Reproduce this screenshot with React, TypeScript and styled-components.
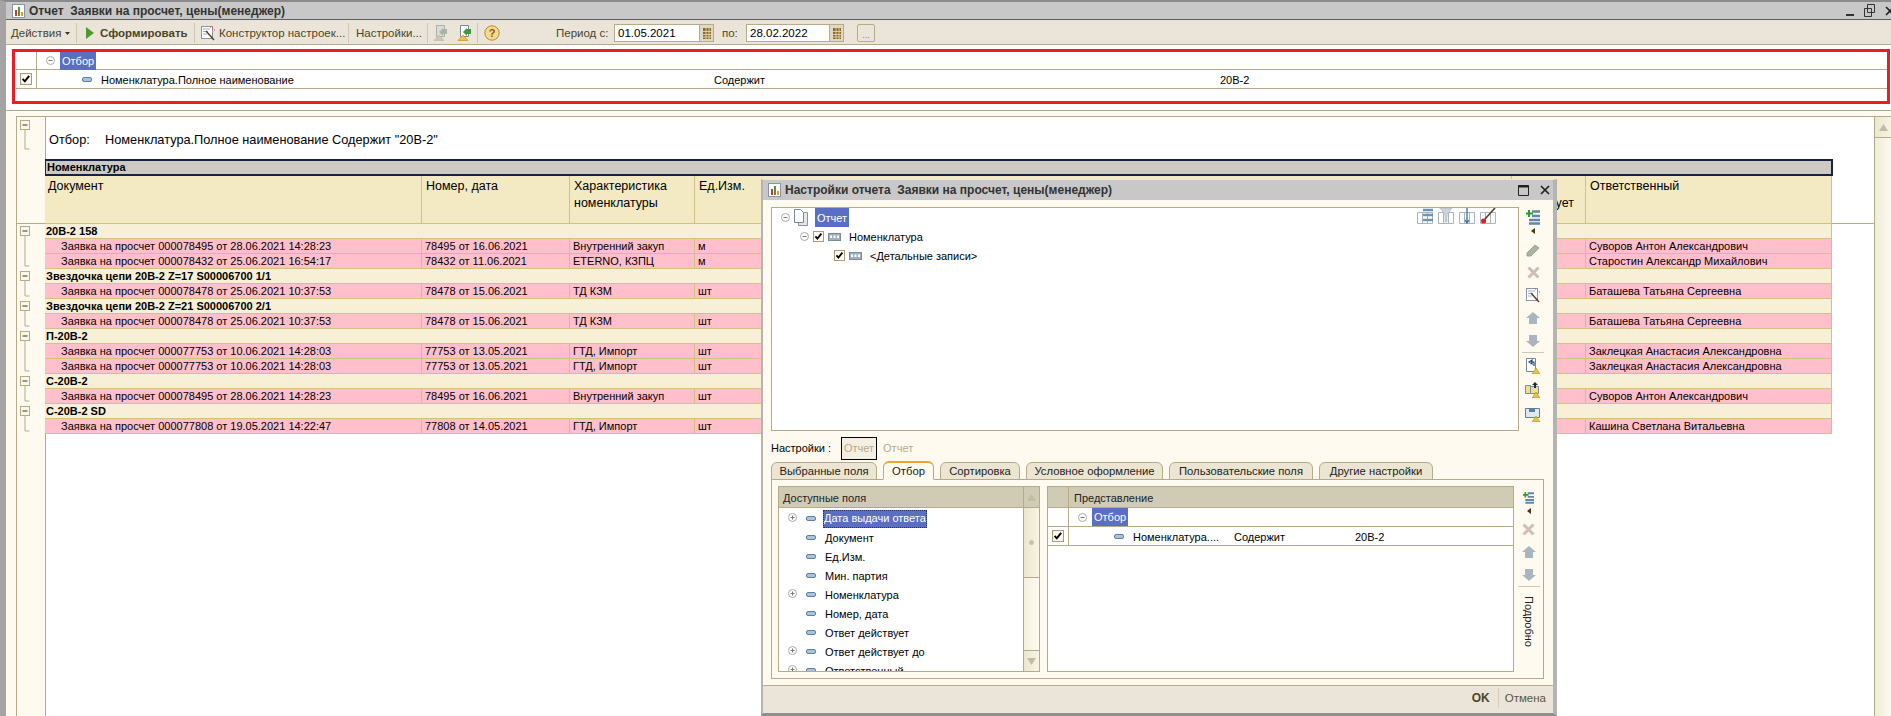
import React from 'react';
import styled, { createGlobalStyle } from 'styled-components';

const GlobalStyle = createGlobalStyle`
  html, body {
    margin: 0;
    padding: 0;
    overflow: hidden;
    background: #fffaf0;
  }
  * {
    box-sizing: border-box;
  }
`;

const LINE = '#b5ab88';
const CELL = '#cfc383';

const Page = styled.div`
  position: relative;
  width: 1891px;
  height: 716px;
  display: flex;
  flex-direction: column;
  overflow: hidden;
  background: #fffaf0;
  border-top: 2px solid #8a8a8a;
  border-left: 6px solid #a4a4a4;
  font-family: 'Liberation Sans', Arial, sans-serif;
  font-size: 11px;
  color: #000;
`;

const TitleBar = styled.div`
  height: 18px;
  flex: none;
  display: flex;
  align-items: center;
  gap: 4px;
  padding-left: 6px;
  overflow: hidden;
  background: #c8c8c8;
  border-bottom: 1px solid #5e5e5e;
`;

const TitleText = styled.span`
  font-size: 12px;
  font-weight: 700;
  color: #333;
  white-space: pre;
`;

const WindowButtons = styled.div`
  margin-left: auto;
  margin-right: -4px;
  display: flex;
  align-items: center;
  gap: 10px;
`;

const Toolbar = styled.div`
  height: 25px;
  flex: none;
  display: flex;
  align-items: center;
  padding: 2px 0 0 5px;
  background: #ebe5d9;
  border-bottom: 1px solid ${LINE};
`;

const ToolText = styled.span<{ $bold?: boolean; $w: number; $l?: number }>`
  width: ${(p) => p.$w}px;
  flex: none;
  margin-left: ${(p) => p.$l ?? 0}px;
  color: #4a4528;
  font-size: 11.5px;
  font-weight: ${(p) => (p.$bold ? 700 : 400)};
  white-space: nowrap;
`;

const ToolSep = styled.span<{ $l: number; $r: number }>`
  width: 1px;
  height: 20px;
  flex: none;
  background: #cfc8b4;
  margin: 0 ${(p) => p.$r}px 0 ${(p) => p.$l}px;
`;

const ToolGap = styled.span<{ $w: number }>`
  width: ${(p) => p.$w}px;
  flex: none;
`;

const DateField = styled.div<{ $w: number }>`
  width: ${(p) => p.$w}px;
  height: 18px;
  flex: none;
  display: flex;
  align-items: center;
  padding-left: 3px;
  background: #fff;
  border: 1px solid ${LINE};
  border-right: none;
  font-size: 11.5px;
`;

const DateButton = styled.div`
  width: 15px;
  height: 18px;
  flex: none;
  display: flex;
  align-items: center;
  justify-content: center;
  background: #e0d9c2;
  border: 1px solid ${LINE};
`;

const DotsButton = styled.div`
  width: 18px;
  height: 18px;
  flex: none;
  margin-left: 13px;
  text-align: center;
  line-height: 20px;
  font-size: 9px;
  color: #777;
  background: #ebe5d9;
  border: 1px solid ${LINE};
  border-radius: 2px;
`;

const FilterPanel = styled.div`
  height: 66px;
  flex: none;
  padding: 4px 1px 0 6px;
  background: #fff;
  border-bottom: 1px solid ${LINE};
`;

const RedFrame = styled.div`
  height: 55px;
  border: 3px solid #ed1c24;
  padding-left: 1px;
  background: #fff;
`;

const FilterRow = styled.div<{ $h?: number }>`
  height: ${(p) => p.$h ?? 19}px;
  display: flex;
  align-items: center;
  border-bottom: 1px solid ${LINE};
`;

const CheckCol = styled.div<{ $w: number }>`
  width: ${(p) => p.$w}px;
  height: 100%;
  flex: none;
  display: flex;
  align-items: center;
  justify-content: center;
  border-right: 1px solid ${LINE};
`;

const Selected = styled.span<{ $h?: number; $l?: number }>`
  display: inline-block;
  height: ${(p) => p.$h ?? 18}px;
  line-height: ${(p) => (p.$h ?? 18) + 1}px;
  margin-left: ${(p) => p.$l ?? 0}px;
  padding: 0 2px;
  background: #5a6fc3;
  color: #fff;
  white-space: nowrap;
`;

const Cell = styled.span<{ $w?: number; $l?: number }>`
  ${(p) => (p.$w ? `width: ${p.$w}px; flex: none;` : '')}
  ${(p) => (p.$l ? `margin-left: ${p.$l}px;` : '')}
  white-space: nowrap;
`;

const InlineCell = styled.span<{ $l: number; $gap: number; $low?: boolean }>`
  display: flex;
  align-items: center;
  height: 100%;
  margin-left: ${(p) => p.$l}px;
  gap: ${(p) => p.$gap}px;
  ${(p) => (p.$low ? 'padding-top: 1px;' : '')}
`;

const Body = styled.div`
  flex: 1;
  min-height: 0;
  display: flex;
  margin-top: 5px;
  background: #fffaf0;
`;

const ReportArea = styled.div`
  flex: 1;
  min-width: 0;
  margin-left: 10px;
  display: grid;
  grid-template-columns: 29px 1fr 17px;
  border-top: 1px solid ${LINE};
  border-left: 1px solid ${LINE};
`;

const Gutter = styled.div`
  display: flex;
  flex-direction: column;
  border-right: 1px solid ${LINE};
`;

const GutterHead = styled.div`
  height: 107px;
  flex: none;
  padding: 3px 0 0 3px;
  border-bottom: 1px solid ${LINE};
`;

const GutterGroup = styled.div<{ $rows: number }>`
  height: ${(p) => p.$rows * 15}px;
  flex: none;
  padding: 2px 0 0 3px;
`;

const Sheet = styled.div`
  background: #fff;
  position: relative;
  min-width: 0;
`;

const SheetRule = styled.div`
  position: absolute;
  left: 0;
  right: 0;
  top: 106px;
  height: 1px;
  background: ${LINE};
`;

const FilterLine = styled.div`
  height: 42px;
  display: flex;
  align-items: center;
  padding: 3px 0 0 3px;
  font-size: 12.75px;
`;

const ReportTable = styled.div`
  position: relative;
  width: 1788px;
  margin-left: -1px;
`;

const GroupHeader = styled.div`
  height: 17px;
  padding-left: 1px;
  font-weight: 700;
  line-height: 13px;
  background: #cdcac3;
  border: 2px solid #14224a;
  border-left-width: 1px;
`;

const Row = styled.div<{ $kind: 'head' | 'group' | 'item' }>`
  display: grid;
  grid-template-columns: 377px 148px 125px 817px 74px 246px;
  height: ${(p) => (p.$kind === 'head' ? 48 : 15)}px;
  width: 1787px;
  background: ${(p) => (p.$kind === 'head' ? '#f3eac3' : p.$kind === 'group' ? '#f7f0d7' : '#ffc0cb')};
  border-bottom: 1px solid ${CELL};
  font-weight: ${(p) => (p.$kind === 'group' ? 700 : 400)};
  font-size: ${(p) => (p.$kind === 'head' ? '12.5px' : '11px')};
`;

const Td = styled.div<{ $pad?: number }>`
  padding-left: ${(p) => p.$pad ?? 3}px;
  line-height: 14px;
  white-space: nowrap;
  overflow: hidden;
  border-right: 1px solid ${CELL};
`;

const HeadTd = styled.div<{ $first: boolean }>`
  padding: 2px 0 0 ${(p) => (p.$first ? 3 : 4)}px;
  line-height: 17px;
  white-space: pre;
  border-right: 1px solid ${CELL};
`;

const GroupTd = styled.div`
  grid-column: 1 / -1;
  padding-left: 1px;
  line-height: 14px;
  white-space: nowrap;
  border-right: 1px solid ${CELL};
`;

const Scrollbar = styled.div`
  border-left: 1px solid ${LINE};
  background: linear-gradient(90deg, #f1ecd9, #fdfaf0);
  display: flex;
  flex-direction: column;
  align-items: center;
`;

const ScrollBtn = styled.div<{ $tan?: boolean }>`
  width: 100%;
  height: 21px;
  flex: none;
  display: flex;
  align-items: center;
  justify-content: center;
  background: ${(p) => (p.$tan ? '#cfcbb5' : 'linear-gradient(90deg, #ece6cf, #f9f4e2)')};
  border-bottom: 1px solid ${LINE};
`;

const Dialog = styled.div`
  position: absolute;
  left: 755px;
  top: 177px;
  width: 796px;
  height: 537px;
  display: flex;
  flex-direction: column;
  background: #fffaf0;
  border-left: 2px solid #b4b4b4;
  border-right: 4px solid #b4b4b4;
  border-bottom: 3px solid #8f8f8f;
  border-top: 1px solid #e6e6e6;
`;

const DialogTitle = styled.div`
  height: 20px;
  flex: none;
  display: flex;
  align-items: center;
  gap: 4px;
  padding-left: 5px;
  background: #c8c8c8;
`;

const DialogTitleText = styled.span`
  font-weight: 700;
  font-size: 12px;
  color: #333;
  white-space: pre;
`;

const DialogButtons = styled.div`
  margin-left: auto;
  display: flex;
  align-items: center;
  gap: 11px;
  padding-right: 3px;
`;

const DialogBody = styled.div`
  flex: none;
  padding: 7px 9px 0 8px;
  display: flex;
  flex-direction: column;
`;

const TopRow = styled.div`
  height: 224px;
  flex: none;
  display: flex;
`;

const TreePanel = styled.div`
  position: relative;
  width: 748px;
  flex: none;
  background: #fff;
  border: 1px solid ${LINE};
`;

const TreeRow = styled.div<{ $indent: number }>`
  height: 19px;
  display: flex;
  align-items: center;
  gap: 4px;
  padding-left: ${(p) => p.$indent}px;
`;

const TreeIcons = styled.div`
  position: absolute;
  top: 0;
  right: 22px;
  display: flex;
  gap: 5px;
`;

const SideTools = styled.div`
  flex: 1;
  display: flex;
  flex-direction: column;
  align-items: center;
  padding: 3px 0 0 3px;
`;

const SideGap = styled.div<{ $h: number }>`
  height: ${(p) => p.$h}px;
  flex: none;
`;

const SideSep = styled.div`
  width: 22px;
  height: 1px;
  flex: none;
  margin: 5px 0;
  background: #cfc8b4;
`;

const SettingsRow = styled.div`
  height: 30px;
  flex: none;
  display: flex;
  align-items: center;
  padding-top: 4px;
`;

const SettingsBox = styled.div`
  width: 36px;
  height: 23px;
  margin: 0 6px 0 10px;
  display: flex;
  align-items: center;
  justify-content: center;
  color: #b5a987;
  background: #f5efe3;
  border: 1px solid #000;
`;

const SettingsName = styled.span`
  color: #b5a987;
`;

const Tabs = styled.div`
  height: 19px;
  flex: none;
  display: flex;
  align-items: flex-end;
  gap: 6px;
  position: relative;
  z-index: 1;
`;

const Tab = styled.div<{ $w: number; $active?: boolean }>`
  width: ${(p) => p.$w}px;
  height: ${(p) => (p.$active ? 19 : 18)}px;
  flex: none;
  text-align: center;
  line-height: 17px;
  font-size: 11.25px;
  color: #222;
  background: ${(p) => (p.$active ? '#fffaf0' : '#ebe5d1')};
  border: 1px solid ${LINE};
  border-top: ${(p) => (p.$active ? '2px solid #e8a93a' : `1px solid ${LINE}`)};
  border-bottom: ${(p) => (p.$active ? '1px solid #fffaf0' : `1px solid ${LINE}`)};
  border-radius: 6px 6px 0 0;
`;

const TabBody = styled.div`
  height: 200px;
  margin-top: -1px;
  flex: none;
  display: flex;
  padding: 6px 0 6px 6px;
  border: 1px solid ${LINE};
`;

const FieldList = styled.div`
  width: 262px;
  flex: none;
  display: grid;
  grid-template-columns: 1fr 16px;
  overflow: hidden;
  background: #fff;
  border: 1px solid ${LINE};
`;

const ListColumn = styled.div`
  min-width: 0;
  overflow: hidden;
`;

const ListHead = styled.div`
  height: 21px;
  padding-left: 4px;
  line-height: 22px;
  color: #222;
  background: #cfcbb5;
  border-bottom: 1px solid ${LINE};
`;

const FieldRow = styled.div`
  height: 19px;
  display: flex;
  align-items: center;
  position: relative;
  padding: 2px 0 0 27px;
  gap: 9px;
`;

const PlusSlot = styled.span`
  position: absolute;
  left: 9px;
  top: 5px;
  display: flex;
`;

const FieldSelected = styled.span`
  display: inline-block;
  height: 18px;
  line-height: 17px;
  margin-left: -2px;
  padding: 0 1px;
  color: #fff;
  background: #5a6fc3;
  outline: 1px dotted #24305e;
  outline-offset: -1px;
`;

const ListScroll = styled.div`
  display: flex;
  flex-direction: column;
  background: linear-gradient(90deg, #f5f1e0, #fdfaf0);
  border-left: 1px solid ${LINE};
`;

const ScrollThumb = styled.div`
  height: 70px;
  flex: none;
  background: radial-gradient(circle at 50% 50%, #c9c4ac 2px, transparent 3px), linear-gradient(90deg, #ece6cf, #f9f4e2);
  border-bottom: 1px solid ${LINE};
`;

const ScrollFill = styled.div`
  flex: 1;
`;

const ScrollFoot = styled.div`
  height: 21px;
  flex: none;
  display: flex;
  align-items: center;
  justify-content: center;
  background: linear-gradient(90deg, #ece6cf, #f9f4e2);
  border-top: 1px solid ${LINE};
`;

const SelectionTable = styled.div`
  width: 467px;
  flex: none;
  margin-left: 7px;
  background: #fff;
  border: 1px solid ${LINE};
`;

const SelHead = styled.div`
  height: 21px;
  display: flex;
  line-height: 22px;
  color: #222;
  background: #cfcbb5;
  border-bottom: 1px solid ${LINE};
`;

const SelRow = styled.div`
  height: 19px;
  display: flex;
  align-items: center;
  border-bottom: 1px solid ${LINE};
`;

const SideToolsSmall = styled.div`
  flex: 1;
  display: flex;
  flex-direction: column;
  align-items: center;
  padding-top: 5px;
`;

const VerticalLabel = styled.div`
  writing-mode: vertical-rl;
  font-size: 11px;
  color: #222;
  margin-top: 4px;
`;

const DialogFooter = styled.div`
  flex: 1;
  min-height: 0;
  margin-top: 6px;
  display: flex;
  align-items: center;
  justify-content: flex-end;
  padding: 0 7px 3px 0;
  background: #ebe5d9;
  border-top: 1px solid ${LINE};
`;

const OkButton = styled.span`
  font-weight: 700;
  font-size: 12px;
  color: #4a4528;
`;

const FooterSep = styled.span`
  width: 1px;
  height: 20px;
  margin: 0 6px 0 8px;
  background: #d5cdb8;
`;

const CancelButton = styled.span`
  color: #5b5636;
  font-size: 11.5px;
`;

function ReportIcon() {
  return (
    <svg width="13" height="14" viewBox="0 0 13 14" style={{ flex: 'none' }}>
      <rect x="0.5" y="0.5" width="12" height="13" fill="#fff" stroke="#8a94a6" />
      <rect x="3" y="6" width="2" height="6" fill="#d8342c" />
      <rect x="6" y="3" width="2" height="9" fill="#4a9a3c" />
      <rect x="9" y="8" width="2" height="4" fill="#e0a020" />
    </svg>
  );
}

function Collapse() {
  return (
    <svg width="9" height="9" viewBox="0 0 9 9" style={{ flex: 'none' }}>
      <circle cx="4.5" cy="4.5" r="4" fill="#fff" stroke="#a8a8a8" />
      <path d="M2.5 4.5h4" stroke="#777" />
    </svg>
  );
}

function Expand() {
  return (
    <svg width="9" height="9" viewBox="0 0 9 9" style={{ flex: 'none' }}>
      <circle cx="4.5" cy="4.5" r="4" fill="#fff" stroke="#a8a8a8" />
      <path d="M2.5 4.5h4M4.5 2.5v4" stroke="#777" />
    </svg>
  );
}

function Check({ size = 11 }: { size?: number }) {
  return (
    <svg width={size} height={size} viewBox="0 0 11 11" style={{ flex: 'none' }}>
      <rect x="0.5" y="0.5" width="10" height="10" fill="#fffdf6" stroke="#a89e78" />
      <path d="M2.4 5.4l2 2.2 4-5" fill="none" stroke="#000" strokeWidth="1.8" />
    </svg>
  );
}

function FieldDash() {
  return (
    <svg width="10" height="5" viewBox="0 0 10 5" style={{ flex: 'none' }}>
      <rect x="0.5" y="0.5" width="9" height="4" rx="1.5" fill="#a9c3dc" stroke="#5f7f9f" />
    </svg>
  );
}

function GroupGlyph() {
  return (
    <svg width="13" height="8" viewBox="0 0 13 8" style={{ flex: 'none' }}>
      <rect x="0.5" y="0.5" width="12" height="7" fill="#9fb0bf" stroke="#7d8a99" />
      <path d="M2 2.5h2v2.5H2zM5.5 2.5h2v2.5h-2zM9 2.5h2v2.5H9z" fill="#fff" />
    </svg>
  );
}

function DocGlyph() {
  return (
    <svg width="14" height="17" viewBox="0 0 14 17" style={{ flex: 'none' }}>
      <path d="M4.5 3.5h9v13h-9z" fill="#e3e8ee" stroke="#8a94a6" />
      <path d="M0.5 0.5h6l3 3v10h-9z" fill="#fff" stroke="#7b8698" />
    </svg>
  );
}

function Play() {
  return (
    <svg width="8" height="12" viewBox="0 0 8 12" style={{ flex: 'none' }}>
      <path d="M0 0l8 6-8 6z" fill="#4f9a2e" />
    </svg>
  );
}

function Wand() {
  return (
    <svg width="15" height="15" viewBox="0 0 15 15" style={{ flex: 'none' }}>
      <rect x="0.5" y="0.5" width="11" height="12" fill="#fff" stroke="#8a94a6" />
      <path d="M2 3h7M2 5.5h5M2 8h4" stroke="#9fb0c4" />
      <path d="M5 5l8 9" stroke="#5a3a20" strokeWidth="1.4" />
      <path d="M11 2h1M13 4h1M9 1h1" stroke="#e04040" />
    </svg>
  );
}

function ListAdd({ small }: { small?: boolean }) {
  return (
    <svg width={small ? 11 : 14} height={small ? 14 : 15} viewBox="0 0 14 15" style={{ flex: 'none' }}>
      <path d="M6 1.5h8M6 6h8M3 10h11M3 13.5h11" stroke="#5f87a8" strokeWidth="2.4" />
      <path d="M3 0v7M0 3.5h7" stroke="#2c9a2c" strokeWidth="2" />
    </svg>
  );
}

function Pointer() {
  return (
    <svg width="4" height="6" viewBox="0 0 4 6" style={{ flex: 'none' }}>
      <path d="M4 0v6L0 3z" fill="#4a3410" />
    </svg>
  );
}

function Pencil() {
  return (
    <svg width="14" height="14" viewBox="0 0 14 14" style={{ flex: 'none' }}>
      <path d="M1 10l8-8 4 3-8 8H1z" fill="#aab5a0" stroke="#9aa592" />
    </svg>
  );
}

function Cross() {
  return (
    <svg width="13" height="13" viewBox="0 0 13 13" style={{ flex: 'none' }}>
      <path d="M1.5 1.5l10 10M11.5 1.5l-10 10" stroke="#cdbfb8" strokeWidth="3" />
    </svg>
  );
}

function ArrowUp() {
  return (
    <svg width="14" height="12" viewBox="0 0 14 12" style={{ flex: 'none' }}>
      <path d="M7 0l7 6h-3v6H3V6H0z" fill="#a9b6bf" />
    </svg>
  );
}

function ArrowDown() {
  return (
    <svg width="14" height="12" viewBox="0 0 14 12" style={{ flex: 'none' }}>
      <path d="M3 0h8v6h3l-7 6-7-6h3z" fill="#a9b6bf" />
    </svg>
  );
}

function SaveLoad({ kind }: { kind: 'undo' | 'open' | 'save' }) {
  return (
    <svg width="16" height="16" viewBox="0 0 16 16" style={{ flex: 'none' }}>
      {kind === 'undo' && <path d="M1.5 0.5h9v13h-9z" fill="#fff" stroke="#6f87a0" />}
      {kind === 'open' && <path d="M0.5 3.5h5v8h-5zM5.5 4.5h8v7h-8z" fill="#f3dc93" stroke="#7d8a99" />}
      {kind === 'save' && <path d="M0.5 2.5h14v9h-14z" fill="#dfe7ef" stroke="#5f7f9f" />}
      {kind === 'undo' && <path d="M4 4l3-2v4zM6 4h3v4" fill="none" stroke="#234a70" strokeWidth="1.2" />}
      {kind === 'open' && <path d="M10 0l3 3h-2v3H9V3H7z" fill="#1d2d3d" />}
      {kind === 'save' && <path d="M4 3h6v3H4z" fill="#5f7f9f" />}
      <path d="M11 10l4 6H7z" fill="#f0c040" stroke="#b08a20" strokeWidth="0.6" />
    </svg>
  );
}

function ToolDoc({ muted }: { muted?: boolean }) {
  return (
    <svg width="15" height="16" viewBox="0 0 15 16" style={{ flex: 'none' }}>
      <path d="M3.5 0.5h8v11h-8z" fill={muted ? '#dcdcd4' : '#fff'} stroke={muted ? '#a9b0ad' : '#7b8698'} />
      <path d="M14 4v5h-4v2L6 7l4-4v1z" fill={muted ? '#a8b4a8' : '#3f9a3a'} />
      <path d="M6 10l5 5.5H1z" fill={muted ? '#c9c9b8' : '#f0c040'} stroke={muted ? '#b5b5a5' : '#b08a20'} strokeWidth="0.6" />
    </svg>
  );
}

function ColumnIcon({ kind }: { kind: 'list' | 'filter' | 'sort' | 'paint' }) {
  return (
    <svg width="16" height="16" viewBox="0 0 16 16" style={{ flex: 'none' }}>
      <path d="M0.5 4.5h15v11h-15zM5.5 4.5v11M10.5 4.5v11" fill="#fff" stroke="#a9b4c0" />
      {kind === 'list' && <path d="M6 2h10M6 7h10M6 12h10" stroke="#6a94b8" strokeWidth="2.4" />}
      {kind === 'filter' && <path d="M2 0h12L9 7v7H7V7z" fill="#cdd3d8" stroke="#a8b0b8" strokeWidth="0.6" />}
      {kind === 'sort' && <path d="M8 0v15M6 12l2 3 2-3" stroke="#3c6e9c" fill="none" strokeWidth="1.3" />}
      {kind === 'paint' && <path d="M15 0L5 11" stroke="#5a3a20" strokeWidth="1.6" />}
      {kind === 'paint' && <circle cx="3.5" cy="13" r="2.5" fill="#e41b1b" />}
    </svg>
  );
}

function Tri({ dir }: { dir: 'up' | 'down' }) {
  return (
    <svg width="9" height="7" viewBox="0 0 9 7">
      <path d={dir === 'up' ? 'M4.5 0L9 7H0z' : 'M4.5 7L9 0H0z'} fill="#c0bca8" />
    </svg>
  );
}

function CalendarGlyph() {
  return (
    <svg width="8" height="11" viewBox="0 0 8 11">
      <rect x="0" y="0" width="8" height="11" fill="#8a6a2e" />
      <path d="M0 3.5h8M0 6.5h8M0 9h8M3 0v11M6 0v11" stroke="#ece2c0" strokeWidth="0.8" />
    </svg>
  );
}

function Marker({ h }: { h: number }) {
  return (
    <svg width="12" height={h} viewBox={`0 0 12 ${h}`} style={{ display: 'block' }}>
      <rect x="0.5" y="0.5" width="9" height="9" fill="#fbf7e6" stroke="#b5ab88" />
      <path d="M2.5 5h5" stroke="#333" />
      <path d={`M5 10V${h - 1}H9.5`} fill="none" stroke="#b5ab88" />
    </svg>
  );
}

const HEADS = ['Документ', 'Номер, дата', 'Характеристика\nноменклатуры', 'Ед.Изм.', 'Ответ\nдействует', 'Ответственный'];

type Item = { doc: string; num: string; kind: string; unit: string; owner: string };
type Group = { name: string; items: Item[] };

const GROUPS: Group[] = [
  {
    name: '20В-2 158',
    items: [
      { doc: 'Заявка на просчет 000078495 от 28.06.2021 14:28:23', num: '78495 от 16.06.2021', kind: 'Внутренний закуп', unit: 'м', owner: 'Суворов Антон Александрович' },
      { doc: 'Заявка на просчет 000078432 от 25.06.2021 16:54:17', num: '78432 от 11.06.2021', kind: 'ETERNO, КЗПЦ', unit: 'м', owner: 'Старостин Александр Михайлович' },
    ],
  },
  {
    name: 'Звездочка цепи 20В-2 Z=17 S00006700 1/1',
    items: [
      { doc: 'Заявка на просчет 000078478 от 25.06.2021 10:37:53', num: '78478 от 15.06.2021', kind: 'ТД КЗМ', unit: 'шт', owner: 'Баташева Татьяна Сергеевна' },
    ],
  },
  {
    name: 'Звездочка цепи 20В-2 Z=21 S00006700 2/1',
    items: [
      { doc: 'Заявка на просчет 000078478 от 25.06.2021 10:37:53', num: '78478 от 15.06.2021', kind: 'ТД КЗМ', unit: 'шт', owner: 'Баташева Татьяна Сергеевна' },
    ],
  },
  {
    name: 'П-20В-2',
    items: [
      { doc: 'Заявка на просчет 000077753 от 10.06.2021 14:28:03', num: '77753 от 13.05.2021', kind: 'ГТД, Импорт', unit: 'шт', owner: 'Заклецкая Анастасия Александровна' },
      { doc: 'Заявка на просчет 000077753 от 10.06.2021 14:28:03', num: '77753 от 13.05.2021', kind: 'ГТД, Импорт', unit: 'шт', owner: 'Заклецкая Анастасия Александровна' },
    ],
  },
  {
    name: 'С-20В-2',
    items: [
      { doc: 'Заявка на просчет 000078495 от 28.06.2021 14:28:23', num: '78495 от 16.06.2021', kind: 'Внутренний закуп', unit: 'шт', owner: 'Суворов Антон Александрович' },
    ],
  },
  {
    name: 'С-20В-2 SD',
    items: [
      { doc: 'Заявка на просчет 000077808 от 19.05.2021 14:22:47', num: '77808 от 14.05.2021', kind: 'ГТД, Импорт', unit: 'шт', owner: 'Кашина Светлана Витальевна' },
    ],
  },
];

const FIELDS = [
  { name: 'Документ', plus: false },
  { name: 'Ед.Изм.', plus: false },
  { name: 'Мин. партия', plus: false },
  { name: 'Номенклатура', plus: true },
  { name: 'Номер, дата', plus: false },
  { name: 'Ответ действует', plus: false },
  { name: 'Ответ действует до', plus: true },
  { name: 'Ответственный', plus: true },
];

const TABS = [
  { label: 'Выбранные поля', w: 106 },
  { label: 'Отбор', w: 51, active: true },
  { label: 'Сортировка', w: 80 },
  { label: 'Условное оформление', w: 137 },
  { label: 'Пользовательские поля', w: 144 },
  { label: 'Другие настройки', w: 114 },
];

function App() {
  return (
    <Page>
      <GlobalStyle />
      <TitleBar>
        <ReportIcon />
        <TitleText>Отчет  Заявки на просчет, цены(менеджер)</TitleText>
        <WindowButtons>
          <svg width="8" height="3" viewBox="0 0 8 3" style={{ marginTop: 8 }}><rect width="8" height="2" y="1" fill="#333" /></svg>
          <svg width="11" height="13" viewBox="0 0 11 13"><path d="M3.5 0.5h7v8h-7zM0.5 4.5h7v8h-7z" fill="#c8c8c8" stroke="#333" /></svg>
          <svg width="10" height="10" viewBox="0 0 10 10"><path d="M1 1l8 8M9 1l-8 8" stroke="#222" strokeWidth="1.6" /></svg>
        </WindowButtons>
      </TitleBar>

      <Toolbar>
        <ToolText $w={50}>Действия</ToolText>
        <svg width="5" height="3" viewBox="0 0 5 3" style={{ marginLeft: 4, flex: 'none' }}><path d="M0 0h5L2.5 3z" fill="#333" /></svg>
        <ToolSep $l={6} $r={9} />
        <Play />
        <ToolText $bold $w={88} $l={6}>Сформировать</ToolText>
        <ToolSep $l={6} $r={6} />
        <Wand />
        <ToolText $w={123} $l={3}>Конструктор настроек...</ToolText>
        <ToolSep $l={6} $r={7} />
        <ToolText $w={64}>Настройки...</ToolText>
        <ToolSep $l={7} $r={5} />
        <ToolDoc muted />
        <ToolGap $w={9} />
        <ToolDoc />
        <ToolSep $l={5} $r={6} />
        <svg width="16" height="16" viewBox="0 0 16 16" style={{ flex: 'none' }}>
          <circle cx="8" cy="8" r="7.2" fill="#f6d98a" stroke="#b9893a" />
          <text x="8" y="12" textAnchor="middle" fontSize="11" fontWeight="700" fill="#8a5a1a" fontFamily="Liberation Sans">?</text>
        </svg>
        <ToolText $w={51} $l={56}>Период с:</ToolText>
        <ToolGap $w={7} />
        <DateField $w={85}>01.05.2021</DateField>
        <DateButton><CalendarGlyph /></DateButton>
        <ToolText $w={15} $l={8}>по:</ToolText>
        <ToolGap $w={9} />
        <DateField $w={83}>28.02.2022</DateField>
        <DateButton><CalendarGlyph /></DateButton>
        <DotsButton>...</DotsButton>
      </Toolbar>

      <FilterPanel>
        <RedFrame>
          <FilterRow $h={18}>
            <CheckCol $w={21} />
            <InlineCell $l={9} $gap={5}>
              <Collapse />
              <Selected>Отбор</Selected>
            </InlineCell>
          </FilterRow>
          <FilterRow>
            <CheckCol $w={21}><Check size={12} /></CheckCol>
            <InlineCell $l={45} $gap={9} $low>
              <FieldDash />
              <Cell $w={604}>Номенклатура.Полное наименование</Cell>
              <Cell $w={497}>Содержит</Cell>
              <Cell>20В-2</Cell>
            </InlineCell>
          </FilterRow>
        </RedFrame>
      </FilterPanel>

      <Body>
        <ReportArea>
          <Gutter>
            <GutterHead><Marker h={30} /></GutterHead>
            {GROUPS.map((g) => (
              <GutterGroup key={g.name} $rows={g.items.length + 1}>
                <Marker h={(g.items.length + 1) * 15 - 4} />
              </GutterGroup>
            ))}
          </Gutter>
          <Sheet>
            <SheetRule />
            <FilterLine>
              <Cell $w={56}>Отбор:</Cell>
              <Cell>Номенклатура.Полное наименование Содержит &quot;20В-2&quot;</Cell>
            </FilterLine>
            <ReportTable>
              <GroupHeader>Номенклатура</GroupHeader>
              <Row $kind="head">
                {HEADS.map((h, i) => (
                  <HeadTd key={h} $first={i === 0}>{h}</HeadTd>
                ))}
              </Row>
              {GROUPS.map((g) => (
                <React.Fragment key={g.name}>
                  <Row $kind="group"><GroupTd>{g.name}</GroupTd></Row>
                  {g.items.map((it, i) => (
                    <Row $kind="item" key={i}>
                      <Td $pad={16}>{it.doc}</Td>
                      <Td>{it.num}</Td>
                      <Td>{it.kind}</Td>
                      <Td>{it.unit}</Td>
                      <Td />
                      <Td>{it.owner}</Td>
                    </Row>
                  ))}
                </React.Fragment>
              ))}
            </ReportTable>
          </Sheet>
          <Scrollbar>
            <ScrollBtn><Tri dir="up" /></ScrollBtn>
          </Scrollbar>
        </ReportArea>
      </Body>

      <Dialog>
        <DialogTitle>
          <ReportIcon />
          <DialogTitleText>Настройки отчета  Заявки на просчет, цены(менеджер)</DialogTitleText>
          <DialogButtons>
            <svg width="11" height="11" viewBox="0 0 11 11"><path d="M0.5 0.5h10v10h-10z" fill="none" stroke="#222" /><path d="M0 1.5h11" stroke="#222" strokeWidth="2" /></svg>
            <svg width="10" height="10" viewBox="0 0 10 10"><path d="M1 1l8 8M9 1l-8 8" stroke="#222" strokeWidth="1.7" /></svg>
          </DialogButtons>
        </DialogTitle>
        <DialogBody>
          <TopRow>
            <TreePanel>
              <TreeIcons>
                <ColumnIcon kind="list" />
                <ColumnIcon kind="filter" />
                <ColumnIcon kind="sort" />
                <ColumnIcon kind="paint" />
              </TreeIcons>
              <TreeRow $indent={9}>
                <Collapse />
                <DocGlyph />
                <Selected $h={19} $l={3}>Отчет</Selected>
              </TreeRow>
              <TreeRow $indent={28}>
                <Collapse />
                <Check />
                <GroupGlyph />
                <Cell $l={4}>Номенклатура</Cell>
              </TreeRow>
              <TreeRow $indent={62}>
                <Check />
                <GroupGlyph />
                <Cell $l={4}>&lt;Детальные записи&gt;</Cell>
              </TreeRow>
            </TreePanel>
            <SideTools>
              <ListAdd />
              <SideGap $h={3} />
              <Pointer />
              <SideGap $h={9} />
              <Pencil />
              <SideGap $h={9} />
              <Cross />
              <SideGap $h={9} />
              <Wand />
              <SideGap $h={9} />
              <ArrowUp />
              <SideGap $h={11} />
              <ArrowDown />
              <SideSep />
              <SaveLoad kind="undo" />
              <SideGap $h={8} />
              <SaveLoad kind="open" />
              <SideGap $h={8} />
              <SaveLoad kind="save" />
            </SideTools>
          </TopRow>
          <SettingsRow>
            <span>Настройки :</span>
            <SettingsBox>Отчет</SettingsBox>
            <SettingsName>Отчет</SettingsName>
          </SettingsRow>
          <Tabs>
            {TABS.map((t) => (
              <Tab key={t.label} $w={t.w} $active={t.active}>{t.label}</Tab>
            ))}
          </Tabs>
          <TabBody>
            <FieldList>
              <ListColumn>
                <ListHead>Доступные поля</ListHead>
                <FieldRow>
                  <PlusSlot><Expand /></PlusSlot>
                  <FieldDash />
                  <FieldSelected>Дата выдачи ответа</FieldSelected>
                </FieldRow>
                {FIELDS.map((f) => (
                  <FieldRow key={f.name}>
                    {f.plus && <PlusSlot><Expand /></PlusSlot>}
                    <FieldDash />
                    <span>{f.name}</span>
                  </FieldRow>
                ))}
              </ListColumn>
              <ListScroll>
                <ScrollBtn $tan><Tri dir="up" /></ScrollBtn>
                <ScrollThumb />
                <ScrollFill />
                <ScrollFoot><Tri dir="down" /></ScrollFoot>
              </ListScroll>
            </FieldList>
            <SelectionTable>
              <SelHead>
                <CheckCol $w={21} />
                <Cell $l={5}>Представление</Cell>
              </SelHead>
              <SelRow>
                <CheckCol $w={21} />
                <InlineCell $l={9} $gap={5}>
                  <Collapse />
                  <Selected>Отбор</Selected>
                </InlineCell>
              </SelRow>
              <SelRow>
                <CheckCol $w={21}><Check size={12} /></CheckCol>
                <InlineCell $l={45} $gap={9} $low>
                  <FieldDash />
                  <Cell $w={92}>Номенклатура....</Cell>
                  <Cell $w={112}>Содержит</Cell>
                  <Cell>20В-2</Cell>
                </InlineCell>
              </SelRow>
            </SelectionTable>
            <SideToolsSmall>
              <ListAdd small />
              <SideGap $h={3} />
              <Pointer />
              <SideGap $h={9} />
              <Cross />
              <SideGap $h={10} />
              <ArrowUp />
              <SideGap $h={11} />
              <ArrowDown />
              <SideSep />
              <VerticalLabel>Подробно</VerticalLabel>
            </SideToolsSmall>
          </TabBody>
        </DialogBody>
        <DialogFooter>
          <OkButton>OK</OkButton>
          <FooterSep />
          <CancelButton>Отмена</CancelButton>
        </DialogFooter>
      </Dialog>
    </Page>
  );
}

export default App;
